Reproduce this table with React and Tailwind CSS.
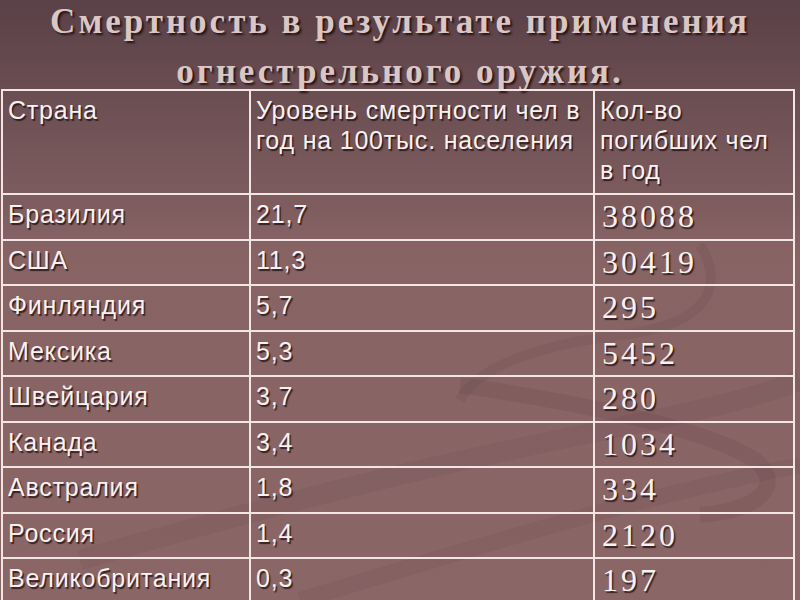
import React from "react";

const rows = [
  ["Бразилия", "21,7", "38088"],
  ["США", "11,3", "30419"],
  ["Финляндия", "5,7", "295"],
  ["Мексика", "5,3", "5452"],
  ["Швейцария", "3,7", "280"],
  ["Канада", "3,4", "1034"],
  ["Австралия", "1,8", "334"],
  ["Россия", "1,4", "2120"],
  ["Великобритания", "0,3", "197"],
];

const sans = "font-['Liberation_Sans',Arial,sans-serif] text-[25px] leading-[30px] tracking-[0.8px] text-[#f7f1f0]";
const serif = "font-['Liberation_Serif','Times_New_Roman',serif]";
const shadow = "[text-shadow:1.5px_1.5px_1px_rgba(40,20,25,0.85)]";

export default function App() {
  return (
    <div className="relative w-[800px] h-[600px] overflow-hidden bg-[linear-gradient(180deg,#5a4047_0%,#6d5054_18%,#876364_42%,#8b6666_100%)]">
      <svg className="absolute inset-0 pointer-events-none" width="800" height="600" viewBox="0 0 800 600">
        <path d="M700 245 C 725 285, 710 325, 620 335 C 540 345, 480 365, 460 400" fill="none" stroke="rgba(70,40,45,0.09)" strokeWidth="10" />
        <path d="M460 385 C 560 400, 700 425, 755 460 C 785 485, 760 510, 700 515" fill="none" stroke="rgba(70,40,45,0.1)" strokeWidth="16" />
        <path d="M80 560 C 220 520, 390 475, 520 448 C 640 422, 740 405, 800 380" fill="none" stroke="rgba(70,40,45,0.08)" strokeWidth="20" />
        <path d="M300 600 C 420 565, 600 505, 800 465" fill="none" stroke="rgba(70,40,45,0.08)" strokeWidth="16" />
      </svg>
      <div className="relative flex flex-col">
        <div className={`h-[89px] flex flex-col items-center ${serif} font-bold text-[35px] text-[#dac6c2] tracking-[3px] [text-shadow:2px_2px_2px_rgba(30,15,20,0.9)]`}>
          <div className="leading-[50px] mt-[-3px] whitespace-nowrap">Смертность в результате применения</div>
          <div className="leading-[50px] whitespace-nowrap">огнестрельного оружия.</div>
        </div>
        <div className="ml-[1px] w-[794px] border-2 border-[#f1e6e4] flex flex-col">
          <div className="flex h-[104px] border-b-2 border-[#f1e6e4]">
            <div className={`w-[248px] border-r-2 border-[#f1e6e4] pl-[5px] pt-[4px] ${sans} ${shadow}`}>Страна</div>
            <div className={`w-[344px] border-r-2 border-[#f1e6e4] pl-[5px] pt-[4px] pr-[6px] ${sans} ${shadow}`}>Уровень смертности чел в год на 100тыс. населения</div>
            <div className={`flex-1 pl-[5px] pt-[4px] pr-[8px] ${sans} ${shadow}`}>Кол-во погибших чел в год</div>
          </div>
          {rows.map((r, i) => (
            <div key={i} className={`flex h-[45.5px] ${i < rows.length - 1 ? "border-b-2 border-[#f1e6e4]" : ""}`}>
              <div className={`w-[248px] border-r-2 border-[#f1e6e4] pl-[5px] pt-[4px] ${sans} ${shadow}`}>{r[0]}</div>
              <div className={`w-[344px] border-r-2 border-[#f1e6e4] pl-[5px] pt-[4px] ${sans} ${shadow}`}>{r[1]}</div>
              <div className={`flex-1 pl-[7px] pt-[3px] ${serif} text-[32px] leading-[36px] tracking-[3px] text-[#f7f1f0] ${shadow}`}>{r[2]}</div>
            </div>
          ))}
        </div>
      </div>
    </div>
  );
}
